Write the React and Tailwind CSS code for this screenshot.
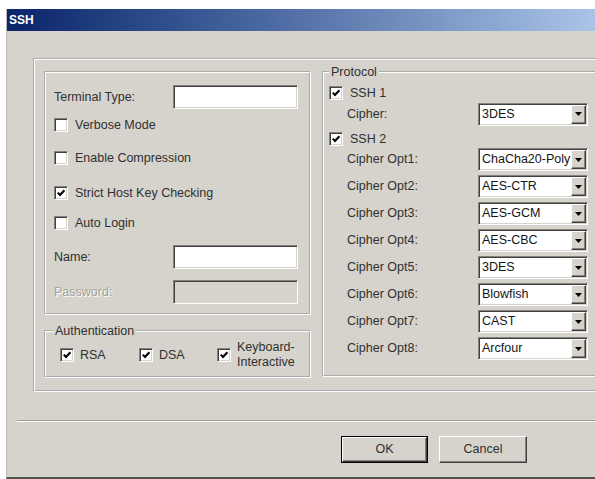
import React from "react";

const sunken =
  "border border-t-[#85827c] border-l-[#85827c] border-b-white border-r-white shadow-[inset_1px_1px_0_#404040,inset_-1px_-1px_0_#d6d3cc]";
const raised =
  "border border-t-white border-l-white border-b-[#404040] border-r-[#404040] shadow-[inset_-1px_-1px_0_#85827c]";
const etched = "border-2 border-white [--tw-border-style:groove]";

/* classic 3D checkbox */
function Check({ on }) {
  return (
    <span className={`w-[14px] h-[14px] shrink-0 bg-white flex items-center justify-center ${sunken}`}>
      {on && (
        <svg width="10" height="10" viewBox="0 0 10 10">
          <polyline points="1.8,4.6 4,7 8.4,2.2" fill="none" stroke="#000" strokeWidth="2.1" />
        </svg>
      )}
    </span>
  );
}

function CheckRow({ on, label, className = "" }) {
  return (
    <div className={`flex items-center gap-[7px] ${className}`}>
      <Check on={on} />
      <span>{label}</span>
    </div>
  );
}

function TextBox({ disabled }) {
  return (
    <div className={`w-[125px] h-[24px] ${disabled ? "bg-[#d6d3cc]" : "bg-white"} ${sunken}`}></div>
  );
}

function Select({ value }) {
  return (
    <div className={`w-[110px] h-[23px] bg-white flex ${sunken} p-[1px]`}>
      <span className="flex-1 overflow-hidden whitespace-nowrap pl-[2px] leading-[19px] text-[#151515]">
        {value}
      </span>
      <span className={`w-[15px] h-full shrink-0 bg-[#d6d3cc] flex items-center justify-center ${raised}`}>
        <svg width="7" height="4" viewBox="0 0 7 4">
          <polygon points="0,0 7,0 3.5,4" fill="#000" />
        </svg>
      </span>
    </div>
  );
}

const ciphers = [
  ["Cipher Opt1:", "ChaCha20-Poly1305"],
  ["Cipher Opt2:", "AES-CTR"],
  ["Cipher Opt3:", "AES-GCM"],
  ["Cipher Opt4:", "AES-CBC"],
  ["Cipher Opt5:", "3DES"],
  ["Cipher Opt6:", "Blowfish"],
  ["Cipher Opt7:", "CAST"],
  ["Cipher Opt8:", "Arcfour"],
];

export default function App() {
  return (
    <div className="w-[595px] h-[479px] overflow-hidden bg-white pt-[9px] pl-[6px] font-['Liberation_Sans',Arial,sans-serif] text-[12.5px] text-[#303030]">
      <div className="w-[620px] h-[470px] bg-[#d6d3cc] border-l border-l-[#bcb9b2] border-b-2 border-b-[#55534f] flex flex-col">
        {/* Title bar */}
        <div className="h-[22px] bg-linear-to-r from-[#0a246a] to-[#b4cdee] flex items-center pl-[2px]">
          <span className="text-white font-bold text-[12px]">SSH</span>
        </div>

        {/* Page */}
        <div className={`ml-[26px] mt-[27px] w-[600px] h-[334px] ${etched} flex items-start pl-[9px] pt-[5px]`}>
          {/* Left column */}
          <div className="mt-[6px] w-[267px] flex flex-col">
            <div className={`h-[244px] ${etched} pl-[8px] flex flex-col`}>
              <div className="mt-[12px] h-[24px] flex items-center">
                <span className="w-[119px]">Terminal Type:</span>
                <TextBox />
              </div>
              <CheckRow className="h-[32px]" label="Verbose Mode" />
              <CheckRow className="h-[34px]" label="Enable Compression" />
              <CheckRow className="h-[36px]" on label="Strict Host Key Checking" />
              <CheckRow className="h-[24px]" label="Auto Login" />
              <div className="mt-[10px] h-[24px] flex items-center">
                <span className="w-[119px]">Name:</span>
                <TextBox />
              </div>
              <div className="mt-[11px] h-[24px] flex items-center">
                <span className="w-[119px] text-[#a5a29b] [text-shadow:1px_1px_0_#fff]">Password:</span>
                <TextBox disabled />
              </div>
            </div>

            <fieldset className={`mt-[9px] h-[54px] ${etched} pl-[7px]`}>
              <legend className="px-[2px] leading-[14px]">Authentication</legend>
              <div className="h-[34px] flex items-center ml-[7px]">
                <div className="w-[79px] flex items-center gap-[6px]">
                  <Check on />
                  <span>RSA</span>
                </div>
                <div className="w-[78px] flex items-center gap-[6px]">
                  <Check on />
                  <span>DSA</span>
                </div>
                <div className="flex items-center gap-[6px]">
                  <Check on />
                  <span className="leading-[15px]">
                    Keyboard-
                    <br />
                    Interactive
                  </span>
                </div>
              </div>
            </fieldset>
          </div>

          {/* Protocol */}
          <fieldset className={`ml-[11px] w-[285px] h-[312px] ${etched} pl-[5px]`}>
            <legend className="px-[2px] leading-[14px]">Protocol</legend>
            <CheckRow className="mt-[5px] h-[18px] gap-[6px]" on label="SSH 1" />
            <div className="h-[24px] flex items-center pl-[18px]">
              <span className="w-[131px]">Cipher:</span>
              <Select value="3DES" />
            </div>
            <CheckRow className="mt-[6px] h-[14px] gap-[6px]" on label="SSH 2" />
            {ciphers.map(([label, value]) => (
              <div key={label} className="h-[27px] flex items-center pl-[18px]">
                <span className="w-[131px]">{label}</span>
                <Select value={value} />
              </div>
            ))}
          </fieldset>
        </div>

        {/* Separator */}
        <div className="mt-[28px] ml-[10px] h-[2px] border-t border-t-[#9f9c96] border-b border-b-white"></div>

        {/* Buttons */}
        <div className="mt-[14px] pl-[334px] flex gap-[11px]">
          <button className="w-[87px] h-[27px] border border-black bg-[#d6d3cc] p-0">
            <span className={`w-full h-full flex items-center justify-center ${raised}`}>OK</span>
          </button>
          <button className={`w-[88px] h-[27px] bg-[#d6d3cc] flex items-center justify-center ${raised}`}>
            Cancel
          </button>
        </div>
      </div>
    </div>
  );
}
